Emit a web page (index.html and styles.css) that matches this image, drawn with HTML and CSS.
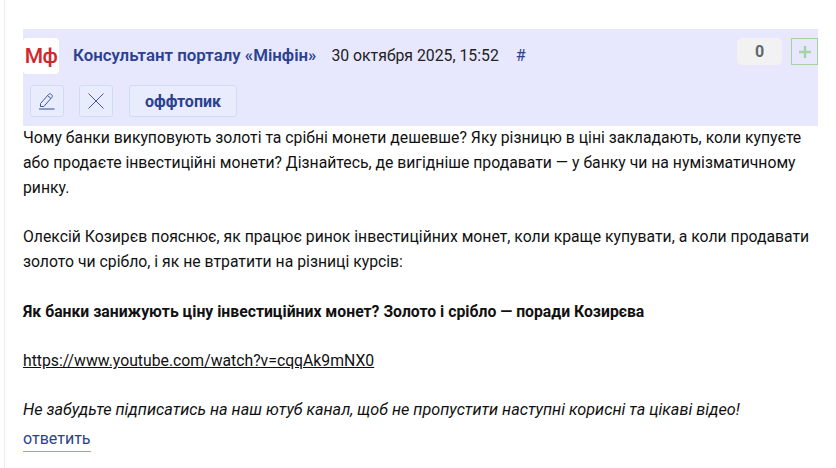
FILE: index.html
```html
<!DOCTYPE html>
<html lang="uk">
<head>
<meta charset="utf-8">
<title>Консультант порталу «Мінфін»</title>
<link rel="stylesheet" href="styles.css">
</head>
<body>
<div class="post">
  <header class="head">
    <div class="row-top">
      <div class="logo">Мф</div>
      <a class="author">Консультант порталу «Мінфін»</a>
      <span class="date">30 октября 2025, 15:52</span>
      <a class="hash">#</a>
      <div class="votes">
        <span class="count">0</span>
        <span class="plus"><svg width="14" height="14" viewBox="0 0 14 14"><path d="M7 1v12M1 7h12" stroke="#a5d2a0" stroke-width="2.4" fill="none"/></svg></span>
      </div>
    </div>
    <div class="row-actions">
      <span class="btn icon"><svg width="18" height="20" viewBox="0 0 18 20" fill="none" stroke="#3f55a5" stroke-width="1"><path d="M2.500 12.500 10.500 3.500c.8-.9 1.700-1 2.600-.2l.6.5c.9.8.9 1.700.2 2.500L5.800 15.500H2.500z"/><path d="M9.600 4.600l3.400 3"/><path d="M1 18h15.500" stroke-width="1.500" stroke="#6f80bf"/></svg></span>
      <span class="btn icon"><svg width="16" height="16" viewBox="0 0 16 16" fill="none" stroke="#3f55a5" stroke-width="1"><path d="M.5.500l15 15M15.500.500l-15 15"/></svg></span>
      <span class="btn tag">оффтопик</span>
    </div>
  </header>
  <div class="body">
    <p>Чому банки викуповують золоті та срібні монети дешевше? Яку різницю в ціні закладають, коли купуєте або продаєте інвестиційні монети? Дізнайтесь, де вигідніше продавати — у банку чи на нумізматичному ринку.</p>
    <p>Олексій Козирєв пояснює, як працює ринок інвестиційних монет, коли краще купувати, а коли продавати золото чи срібло, і як не втратити на різниці курсів:</p>
    <p><strong>Як банки занижують ціну інвестиційних монет? Золото і срібло — поради Козирєва</strong></p>
    <p><a class="link">https://www.youtube.com/watch?v=cqqAk9mNX0</a></p>
    <p class="last"><em>Не забудьте підписатись на наш ютуб канал, щоб не пропустити наступні корисні та цікаві відео!</em></p>
  </div>
  <a class="reply">ответить</a>
</div>
</body>
</html>
```
FILE: styles.css
```css
* { box-sizing: border-box; }
html, body { margin: 0; padding: 0; background: #fff; height: 100%; overflow: hidden; }
body { font-family: Roboto, "Liberation Sans", sans-serif; color: #111; }
.post {
  margin-left: 4px;
  width: 814px;
  height: 468px;
  border-left: 1px solid #ececec;
  padding: 29px 0 0 18px;
}
.head {
  background: #e7e8fd;
  height: 97px;
  padding-top: 9px;
}
.row-top { display: flex; align-items: center; height: 36px; }
.logo {
  width: 36px;
  height: 36px;
  background: #fff;
  border-radius: 4px;
  color: #d2282c;
  font-family: Roboto, sans-serif;
  font-weight: 500;
  font-size: 21px;
  letter-spacing: -.5px;
  display: flex;
  align-items: center;
  justify-content: center;
}
.author {
  margin-left: 14px;
  margin-top: -2px;
  font-size: 16.850px;
  font-weight: 600;
  color: #2c4190;
}
.date { margin-left: 15px; margin-top: -2px; font-size: 15.800px; color: #222; }
.hash { margin-left: 17px; margin-top: -2px; font-size: 16px; color: #2c4190; }
.votes { margin-left: auto; display: flex; gap: 9px; height: 27px; margin-top: -9px; }
.count {
  width: 45px;
  height: 27px;
  background: #f2f2f2;
  border-radius: 5px;
  display: flex;
  align-items: center;
  justify-content: center;
  font-size: 16px;
  font-weight: 700;
  color: #5f6670;
}
.plus {
  width: 27px;
  height: 27px;
  border: 1px solid #a5d2a0;
  display: flex;
  align-items: center;
  justify-content: center;
}
.row-actions { display: flex; margin-top: 11px; padding-left: 7px; gap: 15px; }
.btn {
  height: 32px;
  background: #e9ecfc;
  border: 1px solid #cfdcf6;
  border-radius: 3px;
  display: flex;
  align-items: center;
  justify-content: center;
}
.icon { width: 34px; }
.tag {
  width: 108px;
  margin-left: 1px;
  font-size: 16px;
  font-weight: 700;
  color: #2c4190;
}
.body { font-size: 15.780px; line-height: 24.800px; }
.body p { margin: 0 0 24.800px; }
.body p.last { margin: -1px 0 0; font-size: 16.220px; }
.body strong { font-weight: 700; }
.link { color: #111; text-decoration: underline; }
.reply {
  display: inline-block;
  margin-top: 4px;
  font-size: 16px;
  line-height: 23px;
  color: #2c4190;
  border-bottom: 1px solid #98a6d4;
  padding-bottom: 1px;
}
```
